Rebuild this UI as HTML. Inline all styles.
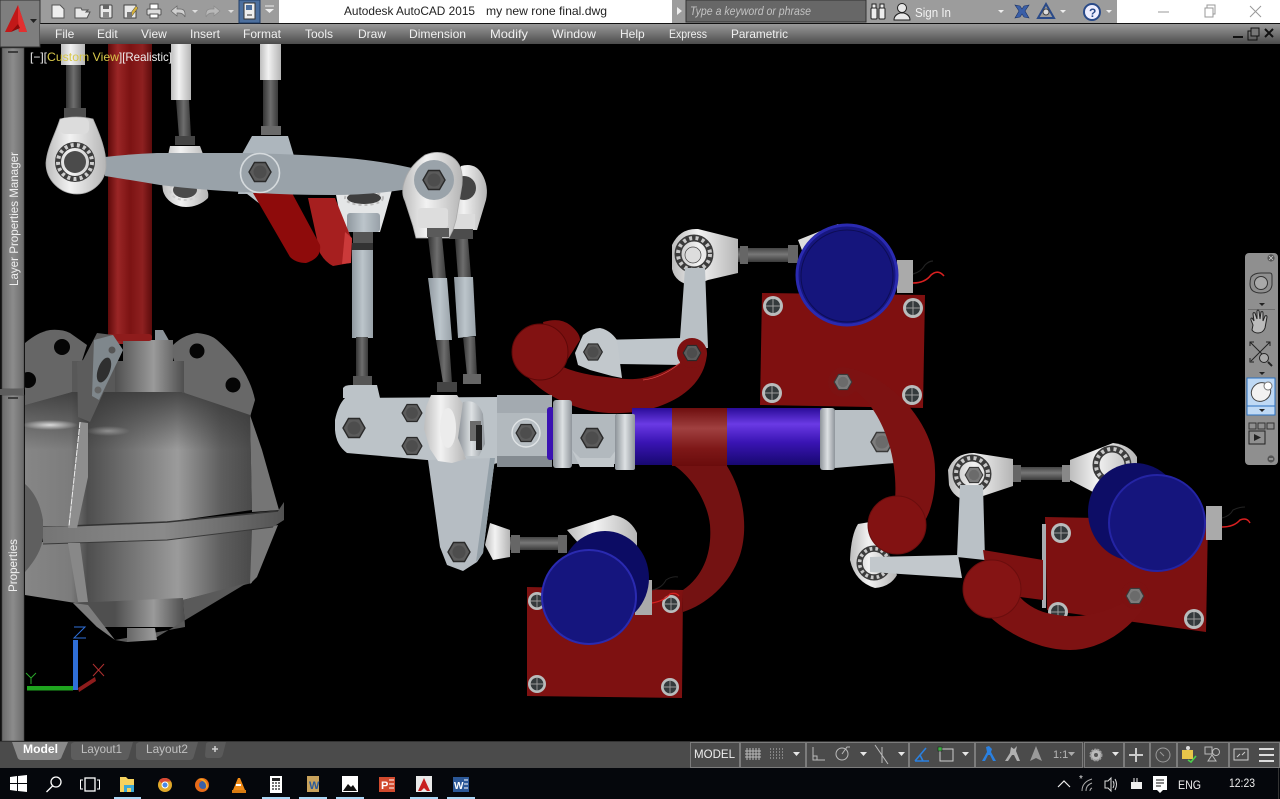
<!DOCTYPE html>
<html><head><meta charset="utf-8"><title>Autodesk AutoCAD 2015</title>
<style>
html,body{margin:0;padding:0;background:#000;width:1280px;height:799px;overflow:hidden}
svg{display:block;position:absolute;left:0;top:0}
text{font-family:"Liberation Sans",sans-serif}
</style></head><body>
<svg width="1280" height="799" viewBox="0 0 1280 799" xmlns="http://www.w3.org/2000/svg">
<defs>
<linearGradient id="menu" x1="0" y1="0" x2="0" y2="1"><stop offset="0" stop-color="#999"/><stop offset=".5" stop-color="#737373"/><stop offset="1" stop-color="#4b4b4b"/></linearGradient>
<linearGradient id="pal" x1="0" y1="0" x2="1" y2="0"><stop offset="0" stop-color="#6b6b6b"/><stop offset=".5" stop-color="#8c8c8c"/><stop offset="1" stop-color="#6a6a6a"/></linearGradient>
<linearGradient id="redcol" x1="0" y1="0" x2="1" y2="0"><stop offset="0" stop-color="#5e0a0a"/><stop offset=".22" stop-color="#9a2626"/><stop offset=".5" stop-color="#7c1313"/><stop offset=".78" stop-color="#8e2020"/><stop offset="1" stop-color="#5c0c0c"/></linearGradient>
<linearGradient id="wht" x1="0" y1="0" x2="1" y2="0"><stop offset="0" stop-color="#bdbdbd"/><stop offset=".4" stop-color="#f2f2f2"/><stop offset="1" stop-color="#b5b5b5"/></linearGradient>
<linearGradient id="rod" x1="0" y1="0" x2="1" y2="0"><stop offset="0" stop-color="#333"/><stop offset=".5" stop-color="#6e6e6e"/><stop offset="1" stop-color="#3a3a3a"/></linearGradient>
<linearGradient id="rodh" x1="0" y1="0" x2="0" y2="1"><stop offset="0" stop-color="#444"/><stop offset=".45" stop-color="#777"/><stop offset="1" stop-color="#3a3a3a"/></linearGradient>
<linearGradient id="slv" x1="0" y1="0" x2="1" y2="0"><stop offset="0" stop-color="#8f989f"/><stop offset=".5" stop-color="#bcc5cb"/><stop offset="1" stop-color="#98a1a8"/></linearGradient>
<linearGradient id="ring" x1="0" y1="0" x2="1" y2="0"><stop offset="0" stop-color="#8c9298"/><stop offset=".5" stop-color="#dde1e3"/><stop offset="1" stop-color="#8f959b"/></linearGradient>
<linearGradient id="tube" x1="0" y1="0" x2="0" y2="1"><stop offset="0" stop-color="#2a0c98"/><stop offset=".28" stop-color="#6a3ae4"/><stop offset=".6" stop-color="#3a14b4"/><stop offset="1" stop-color="#170870"/></linearGradient>
<linearGradient id="band" x1="0" y1="0" x2="0" y2="1"><stop offset="0" stop-color="#6e0e0e"/><stop offset=".35" stop-color="#a04040"/><stop offset=".7" stop-color="#7e1818"/><stop offset="1" stop-color="#6a0c0c"/></linearGradient>
<linearGradient id="body" gradientUnits="userSpaceOnUse" x1="25" y1="0" x2="256" y2="0"><stop offset="0" stop-color="#868686"/><stop offset=".2" stop-color="#7c7c7c"/><stop offset=".27" stop-color="#4e4e4e"/><stop offset=".66" stop-color="#9b9b9b"/><stop offset=".85" stop-color="#5e5e5e"/><stop offset="1" stop-color="#474747"/></linearGradient>
<linearGradient id="shld" x1="0" y1="0" x2="0" y2="1"><stop offset="0" stop-color="#333" stop-opacity=".8"/><stop offset="1" stop-color="#333" stop-opacity="0"/></linearGradient>
<radialGradient id="glow"><stop offset="0" stop-color="#e8e8e8" stop-opacity=".9"/><stop offset="1" stop-color="#e8e8e8" stop-opacity="0"/></radialGradient>
<linearGradient id="neck" gradientUnits="userSpaceOnUse" x1="115" y1="0" x2="185" y2="0"><stop offset="0" stop-color="#4f4f4f"/><stop offset=".55" stop-color="#9a9a9a"/><stop offset="1" stop-color="#4c4c4c"/></linearGradient>
<linearGradient id="bandg" gradientUnits="userSpaceOnUse" x1="43" y1="0" x2="284" y2="0"><stop offset="0" stop-color="#757575"/><stop offset=".5" stop-color="#8a8a8a"/><stop offset="1" stop-color="#525252"/></linearGradient>
<g id="hex"><polygon points="11,0 5.5,9.5 -5.5,9.5 -11,0 -5.5,-9.5 5.5,-9.5" fill="#5b5b5b" stroke="#2a2a2a" stroke-width="1.4"/><circle r="6.5" fill="#4d4d4d"/></g>
<g id="lhex"><polygon points="11,0 5.5,9.5 -5.5,9.5 -11,0 -5.5,-9.5 5.5,-9.5" fill="#7c7c7c" stroke="#3a3a3a" stroke-width="1.4"/><circle r="6.5" fill="#6b6b6b"/></g>
<g id="scr"><circle r="10" fill="#b9bcbc"/><circle r="7" fill="#343a3c"/><path d="M-7 0H7M0-7V7" stroke="#9a9a9a" stroke-width="1"/></g>
<g id="brg"><circle r="16" fill="none" stroke="#3b3b3b" stroke-width="7"/><circle r="16" fill="none" stroke="#c9c9c9" stroke-width="4" stroke-dasharray="3 3.4"/></g>
</defs>

<rect width="1280" height="799" fill="#000"/>

<!-- red column -->
<rect x="108" y="44" width="44" height="300" fill="url(#redcol)"/>

<!-- top rods -->
<rect x="61" y="44" width="24" height="21" fill="url(#wht)"/>
<rect x="66" y="65" width="15" height="44" fill="url(#rod)"/>
<rect x="64" y="108" width="22" height="10" fill="#4e4e4e"/>
<rect x="171" y="44" width="20" height="56" fill="url(#wht)"/>
<polygon points="176,100 189,100 191,137 179,137" fill="url(#rod)"/>
<rect x="175" y="136" width="20" height="9" fill="#444"/>
<rect x="260" y="44" width="21" height="36" fill="url(#wht)"/>
<rect x="263" y="80" width="15" height="47" fill="url(#rod)"/>
<rect x="261" y="126" width="20" height="9" fill="#6a6a6a"/>

<!-- behind bar pieces -->
<path d="M170 146h30l3 8v30c5 5 6 10 5 14c-6 6-14 9-22 9c-10 0-20-6-23-16l-1-8z" fill="url(#wht)"/>
<ellipse cx="185" cy="190" rx="12" ry="8" fill="#4a4a4a"/>
<ellipse cx="185" cy="190" rx="15" ry="10" fill="none" stroke="#ccc" stroke-width="2" stroke-dasharray="3 3"/>
<path d="M252 136h36l6 20v24l-10 14h-46l4-40z" fill="#adb6bd"/>
<path d="M242 190l18 14 18-8z" fill="#bfc6cb"/>
<!-- middle clevis -->
<circle cx="363" cy="188" r="24" fill="#c6cbcf"/>
<path d="M335 190H392L385 215L380 232H347L340 215z" fill="#e4e6e7"/>
<rect x="347" y="213" width="33" height="19" rx="3" fill="url(#slv)"/>
<rect x="353" y="232" width="20" height="11" fill="#555"/>
<rect x="352" y="243" width="21" height="7" fill="#333"/>
<rect x="352" y="250" width="21" height="88" fill="url(#slv)"/>
<rect x="356" y="337" width="12" height="40" fill="url(#rod)"/>
<rect x="353" y="376" width="19" height="9" fill="#555"/>
<ellipse cx="364" cy="198" rx="17" ry="6" fill="#3e3e3e"/>
<ellipse cx="364" cy="198" rx="19" ry="7" fill="none" stroke="#bbb" stroke-width="2" stroke-dasharray="3 3"/>

<!-- red arms -->
<path d="M308 198L335 198L352 240L350 263L333 266Q325 262 320 253z" fill="#a61f1f"/>
<path d="M345 232L352 238L351 263L342 264z" fill="#cb3a3a"/>
<path d="M253 193L292 193L320 245Q322 258 306 263Q296 263 290 257z" fill="#8e0b0b"/>

<!-- far right clevis -->
<path d="M461 166q14-4 21 8q7 12 4 26l-9 30h-26l-3-22z" fill="url(#wht)"/>
<circle cx="464" cy="188" r="12" fill="#444"/>
<rect x="449" y="214" width="26" height="15" fill="#dcdcdc"/>
<rect x="449" y="229" width="24" height="10" fill="#4c4c4c"/>
<polygon points="455,239 468,239 471,277 458,277" fill="url(#rod)"/>
<polygon points="454,277 473,277 476,336 458,338" fill="url(#slv)"/>
<polygon points="463,337 475,337 477,375 467,375" fill="url(#rod)"/>
<rect x="463" y="374" width="18" height="10" fill="#666"/>

<!-- main bar -->
<path d="M105 157Q130 154 157 153L243 153Q300 154 347 158Q390 162 420 170L425 186Q380 195 333 195Q285 195 243 192Q200 190 160 185Q130 180 105 176z" fill="#99a2a9"/>
<!-- left clevis -->
<path d="M60 119Q76 115 93 119C100 135 106 150 106 165C106 182 92 194 77 194C60 194 46 180 46 163C47 148 55 135 60 119Z" fill="url(#wht)" stroke="#aaa" stroke-width=".8"/>
<rect x="60" y="118" width="29" height="16" rx="5" fill="#dcdcdc"/>
<circle cx="75" cy="162" r="17" fill="none" stroke="#3d3d3d" stroke-width="6"/>
<circle cx="75" cy="162" r="17" fill="none" stroke="#cfcfcf" stroke-width="4" stroke-dasharray="3 3.3"/>
<circle cx="75" cy="162" r="11" fill="#4b4b4b"/>
<!-- center bolt -->
<circle cx="260" cy="173" r="19.5" fill="#9aa3aa" stroke="#d5dadd" stroke-width="1.6"/>
<use href="#hex" transform="translate(260 172)"/>
<!-- right clevis -->
<path d="M425 155q15-6 27 2q12 8 10 28l-6 35-3 10-4 8h-33l-3-12-8-25q-4-8-1-18q4-16 21-28z" fill="url(#wht)" stroke="#aaa" stroke-width=".8"/>
<circle cx="434" cy="180" r="20" fill="#9aa3aa"/>
<use href="#hex" transform="translate(434 180)"/>
<rect x="418" y="208" width="30" height="20" rx="3" fill="#ddd"/>
<rect x="427" y="228" width="22" height="9" fill="#5a5a5a"/>
<polygon points="428,237 442,237 446,278 433,278" fill="url(#rod)"/>
<polygon points="428,278 447,278 452,340 436,340" fill="url(#slv)"/>
<polygon points="436,340 449,340 452,383 443,383" fill="url(#rod)"/>
<rect x="437" y="382" width="20" height="10" fill="#444"/>

<!-- gearbox flanges -->
<path d="M25 343Q38 332 50 330Q62 329 70 333L87 345L72 392L25 410z" fill="#666"/>
<circle cx="62" cy="347" r="8" fill="#050505"/>
<circle cx="28" cy="380" r="8" fill="#050505"/>
<path d="M170 348Q182 335 197 333Q210 334 217 340Q234 355 243 370Q252 385 255 400L250 417L185 395z" fill="#686868"/>
<circle cx="197" cy="351" r="7.500" fill="#050505"/>
<circle cx="233" cy="385" r="7.500" fill="#050505"/>
<path d="M155 330h8l8 14h-16z" fill="#8a9197"/>
<rect x="123" y="340" width="50" height="23" fill="url(#neck)"/>
<rect x="115" y="361" width="69" height="33" fill="url(#neck)"/>
<rect x="72" y="361" width="43" height="33" fill="#585858"/>
<rect x="108" y="334" width="44" height="7" fill="#8e1c1c" rx="3"/>
<!-- gearbox body -->
<polygon points="25,405 72,392 182,392 250,415 252,510 167,522 70,526 25,527" fill="url(#body)"/>
<polygon points="25,405 72,392 182,392 250,415 250,450 25,450" fill="url(#shld)"/>
<ellipse cx="50" cy="425" rx="28" ry="5" fill="url(#glow)"/>
<ellipse cx="108" cy="431" rx="22" ry="5" fill="url(#glow)" opacity=".45"/>
<polygon points="250,415 262,450 279,510 252,512" fill="#757575"/>
<polygon points="25,543 252,530 252,583 183,600 88,605 25,595" fill="url(#body)"/>
<polygon points="252,530 278,525 257,577 250,584" fill="#797979"/>
<path d="M25 484q14 12 18 36v18q-2 16-18 34z" fill="#5f5f5f"/>
<polygon points="43,527 70,526 167,522 278,511 284,502 284,520 273,527 167,540 43,544" fill="url(#bandg)"/>
<path d="M70 526l97-4 111-11" stroke="#333" stroke-width="1.6" fill="none"/>
<path d="M43 544l124-4 106-13" stroke="#3a3a3a" stroke-width="1" fill="none"/>
<polygon points="73,603 183,598 185,627 97,627" fill="url(#neck)"/>
<polygon points="183,600 247,583 157,637 127,642 115,640 185,627" fill="#5a5a5a"/>
<polygon points="127,628 155,628 157,640 127,642" fill="url(#neck)"/>
<polygon points="73,603 88,605 115,640 97,627" fill="#7c7c7c"/>
<!-- bracket -->
<polygon points="80,422 88,423 88,477 77,528 68,528" fill="#8e8e8e"/>
<path d="M80 422L69 526" stroke="#eee" stroke-width="1" stroke-dasharray="6 1"/>
<polygon points="68,543 80,543 88,602 78,602" fill="#888"/>
<path d="M77 362l6-2 14-27 16 2 10 15-33 72-12-5z" fill="#5c5c5c"/>
<path d="M94 340l19-5 10 15-24 50-7-4z" fill="#7f878c"/>
<ellipse cx="104" cy="370" rx="6" ry="13" fill="#2f2f2f" transform="rotate(20 104 370)"/>
<circle cx="112" cy="350" r="3.500" fill="#555"/><circle cx="98" cy="390" r="3.500" fill="#666"/>

<!-- UCS -->
<rect x="73" y="640" width="5" height="50" fill="#2f6fd8"/>
<rect x="27" y="686" width="46" height="4.500" fill="#1fa51f"/>
<polygon points="78,688 95,677 96,681 79,692" fill="#8e1c1c"/>
<path d="M74 627h11l-11 11h12" stroke="#2f6fd8" fill="none" stroke-width="1"/>
<path d="M93 664l11 12M104 664l-11 12" stroke="#b03030" fill="none" stroke-width="1"/>
<path d="M26 673l5 5 5-5M31 678v6" stroke="#2aa52a" fill="none" stroke-width="1"/>

<!-- motor plate 1 -->
<polygon points="762,293 925,295 923,408 760,405" fill="#7f1010"/>
<use href="#scr" transform="translate(773 306)"/>
<use href="#scr" transform="translate(913 308)"/>
<use href="#scr" transform="translate(772 393)"/>
<use href="#scr" transform="translate(912 395)"/>

<!-- top clevis -->
<path d="M672 245q8-17 26-16l40 10v34l-30 7-15 6q-18-3-21-17z" fill="url(#wht)"/>
<use href="#brg" transform="translate(694 254)"/>
<circle cx="693" cy="255" r="8" fill="#ddd" stroke="#444" stroke-width=".7"/>
<polygon points="685,268 705,268 708,348 678,350 680,338" fill="#b9c0c5"/>
<path d="M598 340L682 338V365L617 364Z" fill="#bfc6cb"/>
<rect x="738" y="248" width="60" height="14" fill="url(#rodh)"/>
<rect x="740" y="246" width="8" height="18" fill="#666"/>
<rect x="788" y="245" width="10" height="18" fill="#666"/>
<polygon points="798,240 838,224 850,235 805,258" fill="#ddd"/>

<!-- motor 1 -->
<rect x="897" y="260" width="16" height="33" fill="#aaa"/>
<path d="M913 274q8-2 12-9 4-4 8-4" stroke="#222" fill="none" stroke-width="1.200"/>
<path d="M913 283q12 0 18-8 7-6 13 1" stroke="#d82020" fill="none" stroke-width="1.600"/>
<circle cx="847" cy="275" r="50" fill="#16167f" stroke="#2a2ab0" stroke-width="3"/>
<circle cx="847" cy="276" r="46" fill="#15157c" stroke="#0d0d55" stroke-width="1"/>

<!-- upper center red arm -->
<path d="M543 322q17-5 27 3t10 15l-18 28h-10z" fill="#7a0f0f"/>
<path d="M522 370C540 395 580 415 620 413C665 412 705 390 707 353L680 345L680 363C660 375 640 382 617 378C590 376 575 372 563 367L550 345z" fill="#7d1111"/>
<circle cx="540" cy="352" r="28" fill="#821212" stroke="#5e0808" stroke-width="1"/>
<path d="M575 353L583 335Q592 328 600 328Q610 330 617 340L622 378L612 376L590 370L578 365z" fill="#c2c8cc"/>
<use href="#hex" transform="translate(593 352) scale(.85)"/>
<circle cx="692" cy="353" r="15" fill="#7d1111"/>
<use href="#hex" transform="translate(692 353) scale(.8)"/>
<path d="M643 380Q662 378 680 363" stroke="#d44" stroke-width=".8" fill="none"/>

<!-- tube -->
<rect x="632" y="408" width="190" height="57" fill="url(#tube)"/>
<rect x="672" y="408" width="55" height="58" fill="url(#band)"/>

<!-- left plate and clevis -->
<path d="M343 398V388q2-3 8-3h26l3 13z" fill="#bcc3c8"/>
<path d="M335 420Q338 405 345 398L498 397V463L490 465L427 460L370 455L347 453Q336 445 335 430z" fill="#bcc3c8"/>
<use href="#hex" transform="translate(354 428)"/>
<use href="#hex" transform="translate(412 413) scale(.9)"/>
<use href="#hex" transform="translate(412 446) scale(.9)"/>
<!-- vertical lever -->
<polygon points="428,460 495,458 483,553 477,562 463,571 447,565 440,547" fill="#b6bdc3"/>
<polygon points="490,458 495,458 483,553 476,562" fill="#94a0a8"/>
<use href="#hex" transform="translate(459 552)"/>
<!-- block -->
<rect x="497" y="395" width="55" height="20" fill="#a3aab0"/>
<rect x="497" y="413" width="55" height="45" fill="#b2b9be"/>
<rect x="497" y="456" width="55" height="11" fill="#848b91"/>
<circle cx="526" cy="433" r="14" fill="#b8bfc4" stroke="#dfe3e5" stroke-width="1.400"/>
<use href="#hex" transform="translate(526 433) scale(.9)"/>
<!-- clevis rings -->
<path d="M431 395h26l7 10-3 40 5 14-14 4-14-2-8-12-6-20 2-22z" fill="url(#wht)"/>
<ellipse cx="448" cy="428" rx="8" ry="20" fill="#ececec"/>
<path d="M463 402q14-4 20 12l2 30-6 12h-14l-7-18z" fill="url(#ring)"/>
<rect x="470" y="421" width="11" height="20" fill="#6b6b6b"/>
<rect x="476" y="425" width="6" height="25" fill="#222"/>
<!-- collar -->
<rect x="547" y="407" width="7" height="53" rx="3" fill="#3a12b2"/>
<rect x="553" y="400" width="19" height="68" rx="3" fill="url(#ring)"/>
<rect x="572" y="414" width="44" height="50" fill="#b2b9be"/>
<path d="M572 450l8 17h34v-4l2-13-6 8h-30z" fill="#c2c8cc"/>
<use href="#hex" transform="translate(592 438)"/>
<rect x="615" y="414" width="20" height="56" rx="2" fill="url(#ring)"/>
<rect x="820" y="408" width="15" height="62" rx="3" fill="url(#ring)"/>

<!-- right block -->
<polygon points="835,410 880,410 893,448 895,463 835,468" fill="#b9c0c5"/>
<use href="#lhex" transform="translate(882 442)"/>
<!-- right red arm -->
<path d="M843 367C885 372 935 420 935 470C936 495 930 515 922 525L895 500C898 460 885 415 857 392L828 385z" fill="#7d1212"/>
<circle cx="843" cy="382" r="15" fill="#7d1212"/>
<use href="#lhex" transform="translate(843 382) scale(.8)"/>

<!-- lower center: rod and motor 2 -->
<path d="M490 523L510 530V557L493 560L485 545z" fill="url(#wht)"/>
<rect x="510" y="537" width="57" height="13" fill="url(#rodh)"/>
<rect x="511" y="535" width="9" height="18" fill="#666"/>
<rect x="558" y="535" width="9" height="18" fill="#666"/>
<path d="M567 530L613 515Q630 518 637 533V547L580 545z" fill="url(#wht)"/>
<polygon points="527,587 683,590 682,698 527,696" fill="#7e1111"/>
<path d="M675 466L727 466C745 495 748 530 740 555C730 585 705 605 683 612L683 590C705 575 712 550 710 525C708 505 695 480 675 466Z" fill="#741212"/>
<use href="#scr" transform="translate(537 601) scale(.9)"/>
<use href="#scr" transform="translate(671 604) scale(.9)"/>
<use href="#scr" transform="translate(537 684) scale(.9)"/>
<use href="#scr" transform="translate(670 687) scale(.9)"/>
<rect x="635" y="580" width="17" height="35" fill="#aaa"/>
<path d="M652 590q10-2 14-10 6-4 12-3" stroke="#222" fill="none" stroke-width="1"/>
<path d="M652 603q12-2 18-9 6-2 9 2" stroke="#d82020" fill="none" stroke-width="1.200"/>
<ellipse cx="605" cy="578" rx="44" ry="47" fill="#0c0c64"/>
<circle cx="589" cy="597" r="47" fill="#15157e" stroke="#2a2ab0" stroke-width="2"/>

<!-- right group -->
<path d="M1070 460L1113 443Q1130 445 1137 457V485L1093 492L1070 480z" fill="url(#wht)"/>
<use href="#brg" transform="translate(1112 465)"/>
<polygon points="1045,517 1208,520 1206,632 1047,610" fill="#7d1111"/>
<rect x="1042" y="524" width="4" height="84" fill="#a8adb1"/>
<use href="#scr" transform="translate(1061 533)"/>
<use href="#scr" transform="translate(1194 619)"/>
<use href="#scr" transform="translate(1058 612)"/>
<rect x="1206" y="506" width="16" height="34" fill="#aaa"/>
<path d="M1222 518q8-2 11-8 6-3 12-3" stroke="#222" fill="none" stroke-width="1"/>
<path d="M1222 527q12 0 18-7 7-3 10 3" stroke="#d82020" fill="none" stroke-width="1.500"/>
<ellipse cx="1135" cy="512" rx="47" ry="49" fill="#0d0d66"/>
<circle cx="1157" cy="523" r="48" fill="#15157d" stroke="#2424a4" stroke-width="2"/>

<path d="M948 470q6-17 26-17l39 6v27l-30 10-13 6q-17-4-21-17z" fill="url(#wht)"/>
<use href="#brg" transform="translate(972 474)"/>
<use href="#lhex" transform="translate(974 475) scale(.8)"/>
<rect x="1013" y="467" width="57" height="13" fill="url(#rodh)"/>
<rect x="1013" y="465" width="8" height="17" fill="#666"/>
<rect x="1062" y="465" width="8" height="17" fill="#888"/>
<path d="M850 560Q851 535 858 524L870 522L897 575Q890 587 875 588Q855 582 850 560z" fill="url(#wht)"/>
<use href="#brg" transform="translate(874 563) scale(.9)"/>
<polygon points="870,557 958,555 962,578 870,572" fill="#c2c8cc"/>
<polygon points="960,485 983,485 985,560 957,557" fill="#bac1c6"/>
<circle cx="897" cy="525" r="29" fill="#821212" stroke="#6a0d0d" stroke-width="1"/>
<path d="M983 550L1043 560V600L1020 597L990 600z" fill="#7d1111"/>
<path d="M990 617C1010 635 1040 650 1070 650C1100 650 1130 630 1145 605L1123 603C1100 615 1075 620 1047 613C1035 610 1025 603 1020 597L990 590z" fill="#7e1212"/>
<ellipse cx="992" cy="589" rx="29" ry="29" fill="#851414" stroke="#6a0d0d" stroke-width="1"/>
<circle cx="1135" cy="595" r="14" fill="#7d1111"/>
<use href="#lhex" transform="translate(1135 596) scale(.8)"/>

<!-- viewport label -->
<text x="30" y="61" font-size="12" fill="#eee">[−][</text>
<text x="47" y="61" font-size="12" fill="#d8c84a" textLength="72" lengthAdjust="spacingAndGlyphs">Custom View</text>
<text x="119" y="61" font-size="12" fill="#eee" textLength="53" lengthAdjust="spacingAndGlyphs">][Realistic]</text>

<!-- left palettes -->
<rect x="0" y="44" width="2" height="697" fill="#111"/>
<rect x="2" y="48" width="22" height="341" fill="url(#pal)" stroke="#444" stroke-width=".6"/>
<rect x="2" y="395" width="22" height="346" fill="url(#pal)" stroke="#444" stroke-width=".6"/>
<rect x="0" y="389" width="24" height="6" fill="#5d5d5d"/>
<rect x="8" y="51" width="10" height="2" fill="#3d3d3d"/>
<rect x="8" y="397" width="10" height="2" fill="#3d3d3d"/>
<text transform="translate(18 286) rotate(-90)" font-size="12" fill="#eee" textLength="134" lengthAdjust="spacingAndGlyphs">Layer Properties Manager</text>
<text transform="translate(17 592) rotate(-90)" font-size="12" fill="#eee" textLength="53" lengthAdjust="spacingAndGlyphs">Properties</text>

<!-- nav bar -->
<rect x="1245" y="253" width="33" height="212" rx="4" fill="#8f8f8f"/>
<circle cx="1271" cy="258" r="3.600" fill="#555"/><path d="M1269 256l4 4M1273 256l-4 4" stroke="#ccc" stroke-width=".8"/>
<path d="M1251 277q3-4 10-4h9q2 0 2 3v9q-1 8-11 8q-11 0-11-9q0-4 1-7z" fill="none" stroke="#333" stroke-width="1"/>
<circle cx="1261" cy="283" r="6.500" fill="#a9a9a9" stroke="#333"/>
<path d="M1259 303h6l-3 3z" fill="#222"/>
<rect x="1248" y="309" width="27" height=".8" fill="#666"/>
<path d="M1253 325l-2-5q-.5-2 1-2l2 3 -1-7q0-2 2-1l2 6v-8q1-2 2 0l1 8 1-7q2-1 2 1v8l2-5q2-1 2 1l-2 11q-2 5-7 5-4 0-6-3z" fill="#bbb" stroke="#222" stroke-width="1"/>
<path d="M1250 342l17 17M1270 342l-19 19" stroke="#222" stroke-width="1"/>
<path d="M1250 346v-4h4M1270 346v-4h-4M1250 358v4h4" stroke="#222" stroke-width="1" fill="none"/>
<circle cx="1264" cy="358" r="4.500" fill="#aaa" stroke="#222"/><path d="M1268 362l4 4" stroke="#222" stroke-width="2"/>
<path d="M1259 372h6l-3 3z" fill="#222"/>
<rect x="1247" y="378" width="28" height="28" fill="#bfd9f4" stroke="#2a70c0"/>
<rect x="1247" y="406" width="28" height="9" fill="#bfd9f4" stroke="#2a70c0"/>
<path d="M1259 409h6l-3 3z" fill="#222"/>
<ellipse cx="1261" cy="392" rx="10" ry="9" fill="#f2f2f2" stroke="#444" transform="rotate(-35 1261 392)"/>
<circle cx="1268" cy="386" r="4" fill="#fff" stroke="#777"/>
<rect x="1249" y="423" width="7" height="6" fill="none" stroke="#333"/>
<rect x="1258" y="423" width="7" height="6" fill="none" stroke="#333"/>
<rect x="1267" y="423" width="7" height="6" fill="none" stroke="#333"/>
<rect x="1249" y="431" width="16" height="13" fill="none" stroke="#222"/>
<path d="M1254 434l7 3.500-7 3.500z" fill="#222"/>
<circle cx="1271" cy="459" r="3.600" fill="#555"/><path d="M1269 459h4" stroke="#ccc"/>

<!-- titlebar -->
<rect x="0" y="0" width="1280" height="23" fill="#fff"/>
<rect x="0" y="0" width="279" height="23" fill="#9c9c9c"/>
<rect x="672" y="0" width="445" height="23" fill="#9c9c9c"/>
<rect x="0" y="23" width="1280" height="1" fill="#111"/>
<text x="344" y="15" font-size="12" fill="#222" textLength="131" lengthAdjust="spacingAndGlyphs">Autodesk AutoCAD 2015</text>
<text x="486" y="15" font-size="12" fill="#222" textLength="121" lengthAdjust="spacingAndGlyphs">my new rone final.dwg</text>

<!-- QAT -->
<path d="M52 5h8l4 4v9H52z" fill="#eee" stroke="#555"/>
<path d="M75 8h6l1 2h6l-2 2h4l-3 6H75z" fill="#e8e8e8" stroke="#555"/>
<rect x="100" y="5" width="12" height="13" rx="1" fill="#e8e8e8" stroke="#444"/><rect x="103" y="5" width="6" height="4" fill="#666"/><rect x="103" y="12" width="6" height="6" fill="#888"/>
<rect x="124" y="5" width="12" height="13" fill="#e8e8e8" stroke="#444"/><path d="M130 14l6-8 2 2-6 8z" fill="#d4b03a" stroke="#444" stroke-width=".5"/><rect x="127" y="12" width="5" height="6" fill="#777"/>
<rect x="150" y="4" width="8" height="5" fill="#fff" stroke="#555"/><rect x="147" y="9" width="14" height="6" rx="1" fill="#ddd" stroke="#555"/><rect x="150" y="14" width="8" height="4" fill="#fff" stroke="#555"/>
<path d="M171 11l6-5v3h3q5 0 5 5v3q-2-4-6-4h-2v3z" fill="#cfcfcf" stroke="#666" stroke-width=".7"/>
<path d="M192 10h6l-3 3z" fill="#ddd"/>
<path d="M220 11l-6-5v3h-3q-5 0-5 5v3q2-4 6-4h2v3z" fill="#b8b8b8" stroke="#8a8a8a" stroke-width=".7"/>
<path d="M228 10h6l-3 3z" fill="#ddd"/>
<rect x="239" y="0" width="21" height="23" fill="#4c6f9e" stroke="#1f3c66"/>
<rect x="244" y="3" width="11" height="16" fill="#eee" stroke="#333"/><rect x="246" y="5" width="6" height="5" fill="#4c6f9e"/><path d="M247 15h5" stroke="#333"/>
<path d="M265 6h9" stroke="#eee"/><path d="M265 9h9l-4.500 4z" fill="#eee"/>

<!-- logo -->
<rect x="0" y="0" width="40" height="47" fill="#7e7e7e" stroke="#333"/>
<path d="M18 5l-13 27h6l7-6 1 6h8z" fill="#c21818"/><path d="M18 5l9 27h-8l-1-14z" fill="#e23030"/><path d="M11 32l7-8 2 4z" fill="#8c0a0a"/>
<path d="M30 19h7l-3.500 4z" fill="#222"/>

<!-- menu bar -->
<rect x="40" y="24" width="1240" height="20" fill="url(#menu)"/>
<g font-size="12" fill="#f0f0f0">
<text x="55" y="38">File</text><text x="97" y="38">Edit</text><text x="141" y="38">View</text><text x="190" y="38">Insert</text><text x="243" y="38" textLength="38" lengthAdjust="spacingAndGlyphs">Format</text><text x="305" y="38">Tools</text><text x="358" y="38">Draw</text><text x="409" y="38" textLength="57" lengthAdjust="spacingAndGlyphs">Dimension</text><text x="490" y="38" textLength="38" lengthAdjust="spacingAndGlyphs">Modify</text><text x="552" y="38" textLength="44" lengthAdjust="spacingAndGlyphs">Window</text><text x="620" y="38">Help</text><text x="669" y="38" textLength="38" lengthAdjust="spacingAndGlyphs">Express</text><text x="731" y="38" textLength="57" lengthAdjust="spacingAndGlyphs">Parametric</text>
</g>
<rect x="1233" y="36" width="10" height="2" fill="#111"/>
<rect x="1248" y="31" width="9" height="9" fill="none" stroke="#111"/><rect x="1251" y="28" width="8" height="8" fill="#777" stroke="#111"/>
<path d="M1265 29l8 8M1273 29l-8 8" stroke="#111" stroke-width="2"/>

<!-- search area -->
<path d="M677 7l5 4-5 4z" fill="#eee"/>
<rect x="686" y="0" width="180" height="22" fill="#676767" stroke="#333"/>
<text x="690" y="15" font-size="12" font-style="italic" fill="#c2c2c2" textLength="121" lengthAdjust="spacingAndGlyphs">Type a keyword or phrase</text>
<g stroke="#222" fill="#eee"><rect x="871" y="8" width="6" height="11" rx="1"/><rect x="879" y="8" width="6" height="11" rx="1"/><rect x="872" y="4" width="4" height="4"/><rect x="880" y="4" width="4" height="4"/></g>
<circle cx="902" cy="8" r="4.500" fill="#e8e8e8" stroke="#222"/><path d="M894 20q0-5 6-7h4q6 2 6 7z" fill="#e8e8e8" stroke="#222"/>
<text x="915" y="17" font-size="13" fill="#f2f2f2" textLength="36" lengthAdjust="spacingAndGlyphs">Sign In</text>
<path d="M998 10h6l-3 3z" fill="#eee"/>
<path d="M1015 5l5 1 2 3 2-3 5-1-4 6 4 7-5-1-2-3-2 3-5 1 4-7z" fill="#3a5fa8" stroke="#1c3366" stroke-width=".6"/>
<path d="M1046 4l8 14h-16z" fill="none" stroke="#2a4a88" stroke-width="2"/><circle cx="1046" cy="12" r="3" fill="#ddd" stroke="#444"/>
<path d="M1060 10h6l-3 3z" fill="#eee"/>
<circle cx="1092" cy="12" r="8" fill="#eef" stroke="#2a4a88" stroke-width="2"/>
<text x="1089" y="17" font-size="12" font-weight="bold" fill="#2a4a88">?</text>
<path d="M1106 10h6l-3 3z" fill="#eee"/>
<!-- window controls -->
<path d="M1158 12h11" stroke="#999"/>
<rect x="1205" y="8" width="8" height="9" fill="#fff" stroke="#999"/><path d="M1207 8V5h8v9h-2" stroke="#999" fill="none"/>
<path d="M1250 6l11 11M1261 6l-11 11" stroke="#999"/>

<!-- bottom tabs + status -->
<rect x="0" y="741" width="1280" height="27" fill="#4b4b4b"/>
<rect x="0" y="741" width="1280" height="1" fill="#333"/>
<path d="M12 742h56l-6 14q-1 4-5 4H21q-3 0-4-4z" fill="#8a8a8a"/>
<path d="M71 744q2-2 4-2h58l-4 14q-1 4-4 4H75q-4 0-4-4z" fill="#5d5d5d"/>
<path d="M136 744q2-2 4-2h58l-4 14q-1 4-4 4h-50q-4 0-4-4z" fill="#5d5d5d"/>
<path d="M206 744q1-2 3-2h17l-3 12q-1 4-4 4h-11q-3 0-3-3z" fill="#5a5a5a"/>
<text x="23" y="753" font-size="12" font-weight="bold" fill="#fff" textLength="35" lengthAdjust="spacingAndGlyphs">Model</text>
<text x="81" y="753" font-size="12" fill="#c0c0c0" textLength="41" lengthAdjust="spacingAndGlyphs">Layout1</text>
<text x="146" y="753" font-size="12" fill="#c0c0c0" textLength="42" lengthAdjust="spacingAndGlyphs">Layout2</text>
<path d="M215 746v6M212 749h6" stroke="#ccc" stroke-width="1.600"/>

<g fill="none" stroke="#7c7c7c"><rect x="690.5" y="742.5" width="49" height="25"/><rect x="740.5" y="742.5" width="65" height="25"/><rect x="806.5" y="742.5" width="102" height="25"/><rect x="909.5" y="742.5" width="65" height="25"/><rect x="975.5" y="742.5" width="107" height="25"/><rect x="1084.5" y="742.5" width="39" height="25"/><rect x="1124.5" y="742.5" width="25" height="25"/><rect x="1150.5" y="742.5" width="26" height="25"/><rect x="1177.5" y="742.5" width="51" height="25"/><rect x="1229.5" y="742.5" width="50" height="25"/></g>
<text x="694" y="758" font-size="12" fill="#eee" textLength="41" lengthAdjust="spacingAndGlyphs">MODEL</text>
<path d="M747 748v12M750 748v12M753 748v12M756 748v12M759 748v12M745 751h16M745 754h16M745 757h16" stroke="#bbb" stroke-width="1" fill="none"/>
<path d="M770 749h14M770 752h14M770 755h14M770 758h14" stroke="#aaa" stroke-width="1.200" stroke-dasharray="1 2" fill="none"/>
<path d="M793 752h7l-3.500 4z" fill="#e8e8e8"/>
<path d="M813 747v13h12M813 756h4v4" stroke="#bbb" fill="none"/>
<circle cx="842" cy="754" r="6" fill="none" stroke="#bbb"/><path d="M842 754l5-7h3" stroke="#bbb" fill="none"/>
<path d="M860 752h7l-3.500 4z" fill="#e8e8e8"/>
<path d="M875 745l13 19M882 747v16" stroke="#bbb" fill="none"/>
<path d="M898 752h7l-3.500 4z" fill="#e8e8e8"/>
<path d="M915 761l11-13M915 761h14M920 755l3 6" stroke="#2a80e0" stroke-width="1.600" fill="none"/>
<rect x="940" y="749" width="13" height="12" fill="none" stroke="#ccc"/><rect x="938" y="747" width="4" height="4" fill="#3cb043" stroke="#111" stroke-width=".5"/>
<path d="M962 752h7l-3.500 4z" fill="#e8e8e8"/>
<path d="M982 761l5-9 -1-5 3-1 3 3-1 3 5 9-3 0-3-6-2 0-3 6z" fill="#2a80e0"/>
<path d="M1005 761l5-8 1-6 3 2 3-3-1 5 4 10-3 0-3-6-2 0-4 6z" fill="#b0b0b0"/>
<path d="M1030 761l6-15 6 15-6-3z" fill="#9a9a9a"/>
<text x="1053" y="758" font-size="11" fill="#b8b8b8">1:1</text>
<path d="M1068 752h7l-3.500 4z" fill="#aaa"/>
<circle cx="1096" cy="755" r="5.500" fill="#bbb" stroke="#999" stroke-width="2" stroke-dasharray="2 1"/><circle cx="1096" cy="755" r="2" fill="#555"/>
<path d="M1112 752h7l-3.500 4z" fill="#e8e8e8"/>
<path d="M1136 748v14M1129 755h14" stroke="#ccc" stroke-width="2"/>
<circle cx="1163" cy="755" r="7" fill="none" stroke="#9a9a9a"/><path d="M1160 752l4 4" stroke="#9a9a9a"/>
<rect x="1182" y="750" width="11" height="9" fill="#e8c64a"/><circle cx="1188" cy="748" r="2" fill="#ddd"/><path d="M1188 760l3 2 5-6" stroke="#4cd04c" stroke-width="1.600" fill="none"/>
<rect x="1205" y="747" width="7" height="7" fill="none" stroke="#bbb"/><circle cx="1216" cy="752" r="3.500" fill="none" stroke="#bbb"/><path d="M1208 761l4-6 4 6z" fill="none" stroke="#bbb"/>
<rect x="1234" y="749" width="14" height="11" fill="none" stroke="#ccc"/><path d="M1237 757l3-3M1245 752l-3 3" stroke="#ccc"/>
<path d="M1259 749h15M1259 755h15M1259 761h15" stroke="#ddd" stroke-width="2"/>

<!-- taskbar -->
<rect x="0" y="768" width="1280" height="31" fill="#05070c"/>
<path d="M10 777l7-1v7h-7zM18 776l9-1v8h-9zM10 784h7v7l-7-1zM18 784h9v8l-9-1z" fill="#fff"/>
<circle cx="56" cy="782" r="5" fill="none" stroke="#fff" stroke-width="1.300"/><path d="M52.500 786l-6 6" stroke="#fff" stroke-width="1.300"/>
<rect x="85" y="778" width="10" height="13" fill="none" stroke="#fff" stroke-width="1.300"/><path d="M83 780h-2.500v9H83M97 780h2.500v9H97" stroke="#fff" fill="none"/>
<path d="M120 777h6l2 2h6v13h-14z" fill="#f6d25e"/><rect x="124" y="785" width="10" height="7" fill="#3da9d6"/><rect x="127" y="788" width="4" height="4" fill="#f6d25e"/>
<circle cx="165" cy="785" r="7" fill="#e0a82a"/><path d="M165 778a7 7 0 0 1 6 3.500h-6a3.500 3.500 0 0 0-3 2l-3-3a7 7 0 0 1 6-2.500z" fill="#d94735"/><circle cx="165" cy="785" r="3" fill="#4a88e8" stroke="#fff"/>
<circle cx="202" cy="785" r="7" fill="#e66a1a"/><circle cx="203" cy="785" r="4" fill="#3a5fa8"/><path d="M198 779q8-2 10 8l-3 3q4-8-7-11z" fill="#f5a623"/>
<path d="M238 778l2 0 5 12h-12z" fill="#f08a16"/><path d="M236 784h5v2h-5z" fill="#fff"/><rect x="232" y="790" width="14" height="3" fill="#d87a10"/>
<rect x="270" y="776" width="12" height="17" fill="#fff"/><rect x="272" y="778" width="8" height="3" fill="#222"/><path d="M272 783h8M272 786h8M272 789h8" stroke="#444" stroke-width="1.500" stroke-dasharray="2 1"/>
<rect x="307" y="776" width="12" height="16" fill="#c9a25c"/><text x="309" y="789" font-size="11" font-weight="bold" fill="#2a5a9a">W</text>
<rect x="342" y="776" width="16" height="16" fill="#fff"/><path d="M343 791l5-7 3 3 2-2 4 6z" fill="#111"/>
<rect x="379" y="777" width="16" height="15" fill="#d24a2e"/><text x="381" y="789" font-size="11" font-weight="bold" fill="#fff">P</text><path d="M389 780h5M389 784h5M389 788h5" stroke="#fff"/>
<rect x="416" y="776" width="16" height="16" fill="#e9e9e9"/><path d="M424 778l-6 13h3l3-3 3 3h3z" fill="#c82020"/>
<rect x="453" y="777" width="16" height="15" fill="#2b5797"/><text x="454" y="789" font-size="10" font-weight="bold" fill="#fff">W</text><path d="M464 780h4M464 784h4M464 788h4" stroke="#fff"/>
<g fill="#a9d6f5"><rect x="114" y="797" width="27" height="2"/><rect x="262" y="797" width="28" height="2"/><rect x="299" y="797" width="28" height="2"/><rect x="336" y="797" width="28" height="2"/><rect x="410" y="797" width="28" height="2"/><rect x="447" y="797" width="28" height="2"/></g>
<path d="M1058 787l6-6 6 6" stroke="#eee" fill="none" stroke-width="1.200"/>
<path d="M1082 791q0-9 10-12M1086 791q0-6 6-8M1090 791q0-2 2-3" stroke="#aaa" fill="none"/><text x="1079" y="782" font-size="10" fill="#ddd">*</text>
<path d="M1105 781h3l3-3v13l-3-3h-3z" fill="none" stroke="#ddd"/><path d="M1113 781q2 3 0 7M1115 779q3 5 0 11" stroke="#ddd" fill="none"/>
<rect x="1131" y="782" width="11" height="7" fill="#eee"/><path d="M1134 778v4M1137 778v4" stroke="#eee"/>
<path d="M1153 776h14v14h-4l-3 3-3-3h-4z" fill="#fff"/><path d="M1156 780h8M1156 783h8M1156 786h5" stroke="#111"/>
<text x="1178" y="789" font-size="12" fill="#eee" textLength="23" lengthAdjust="spacingAndGlyphs">ENG</text>
<text x="1229" y="787" font-size="12" fill="#eee" textLength="26" lengthAdjust="spacingAndGlyphs">12:23</text>
<rect x="1278" y="768" width="1" height="31" fill="#333"/>
</svg>
</body></html>
